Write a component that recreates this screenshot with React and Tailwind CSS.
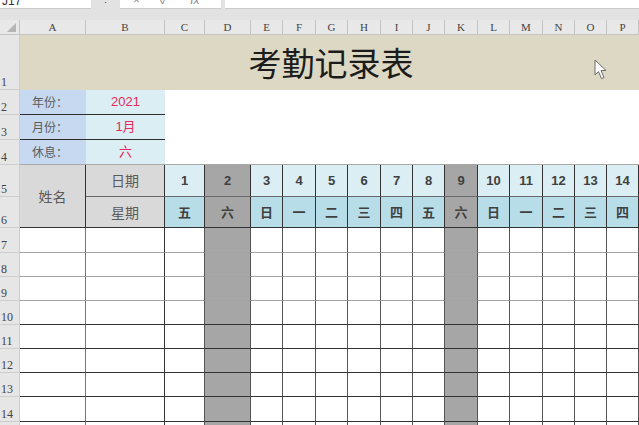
import React from 'react';

const cjk = '"Noto Sans CJK SC", "Noto Sans", sans-serif';
const serif = '"Liberation Serif", "DejaVu Serif", serif';
const arial = '"Liberation Sans", "Noto Sans CJK SC", sans-serif';

const letters = ['A', 'B', 'C', 'D', 'E', 'F', 'G', 'H', 'I', 'J', 'K', 'L', 'M', 'N', 'O', 'P'];

const days = [
  [1, '五'], [2, '六'], [3, '日'], [4, '一'], [5, '二'], [6, '三'], [7, '四'],
  [8, '五'], [9, '六'], [10, '日'], [11, '一'], [12, '二'], [13, '三'], [14, '四'],
];

const info = [
  { row: 2, label: '年份：', value: '2021' },
  { row: 3, label: '月份：', value: '1月' },
  { row: 4, label: '休息：', value: '六' },
];

const dataRows = [7, 8, 9, 10, 11, 12, 13, 14, 15];

const RowNum = ({ n }) => (
  <div
    className="bg-[#e6e6e6] border-b border-r border-[#cdcdcd] flex items-end pl-[1px] text-[12px] leading-none text-[#444] pb-[1px]"
    style={{ fontFamily: serif }}
  >
    {n}
  </div>
);

const Cursor = () => (
  <svg className="absolute left-[594px] top-[59px]" width="15" height="22" viewBox="0 0 15 22">
    <path d="M1 1 L1 16 L4.5 12.5 L7.5 19.5 L10 18.5 L7 11.5 L12 11.5 Z" fill="#fff" stroke="#6b6b6b" strokeWidth="1" strokeLinejoin="round" />
  </svg>
);

export default function App() {
  return (
    <div className="w-[639px] h-[425px] overflow-hidden bg-white relative">
      {/* formula bar */}
      <div className="h-[20px] bg-[#e2e2e2] flex items-start text-[#333]" style={{ fontFamily: arial }}>
        <div className="w-[91px] h-[9px] bg-white overflow-hidden border-b border-[#cbcbcb]">
          <div className="text-[12px] leading-none -mt-[5px] pl-[2px]">J17</div>
        </div>
        <div className="w-[29px] h-[9px] overflow-hidden flex justify-center">
          <div className="text-[11px] leading-none -mt-[6px] text-[#555]">⋮</div>
        </div>
        <div className="w-[101px] h-[9px] bg-white overflow-hidden border-b border-[#cbcbcb] flex text-[#888]">
          <div className="text-[12px] leading-none -mt-[6px] ml-[13px]">×</div>
          <div className="text-[12px] leading-none -mt-[6px] ml-[20px]">✓</div>
          <div className="text-[12px] leading-none -mt-[6px] ml-[22px] italic">fx</div>
        </div>
        <div className="w-[4px]" />
        <div className="flex-1 h-[9px] bg-white border-b border-[#cbcbcb]" />
      </div>

      <div className="grid grid-cols-[20px_66px_79px_40px_46px_32px_33px_32px_33px_32px_32px_33px_32px_33px_32px_32px_32px] grid-rows-[15px_55px_25px_25px_25px_32px_31px_25px_24px_24px_24px_24px_24px_24px_25px_24px]">
        {/* column headers */}
        <div className="bg-[#e8e8e8] border-b border-r border-[#c4c4c4] flex items-end justify-end pr-[3px] pb-[2px]">
          <div className="w-0 h-0 border-l-[9px] border-l-transparent border-b-[9px] border-b-[#b5b5b5]" />
        </div>
        {letters.map((l) => (
          <div
            key={l}
            className="bg-[#e8e8e8] border-b border-r border-[#c4c4c4] flex items-end justify-center pb-[1px] text-[11px] leading-none text-[#444]"
            style={{ fontFamily: serif }}
          >
            {l}
          </div>
        ))}

        {/* title */}
        <RowNum n={1} />
        <div
          className="col-span-16 bg-[#ddd8c4] flex items-center justify-center text-[33px] text-[#1c1c1c] pl-[3px]"
          style={{ fontFamily: cjk }}
        >
          考勤记录表
        </div>

        {/* info rows */}
        {info.map((r) => (
          <React.Fragment key={r.row}>
            <RowNum n={r.row} />
            <div
              className={`bg-[#c6d9f0] flex items-center pl-[12px] text-[12px] text-[#5c5c5c] border-b ${r.row === 4 ? 'border-[#a8a8a8]' : 'border-[#2f2f2f]'}`}
              style={{ fontFamily: cjk }}
            >
              {r.label}
            </div>
            <div
              className={`bg-[#dbeef4] flex items-center justify-center text-[13px] text-[#e8285a] border-b ${r.row === 4 ? 'border-[#a8a8a8]' : 'border-[#2f2f2f]'}`}
              style={{ fontFamily: arial }}
            >
              {r.value}
            </div>
            <div className={`col-span-14 bg-white ${r.row === 4 ? 'border-b border-[#a8a8a8]' : ''}`} />
          </React.Fragment>
        ))}

        {/* header row 5 */}
        <RowNum n={5} />
        <div
          className="row-span-2 bg-[#d9d9d9] border-r border-b border-[#333] flex items-center justify-center text-[14px] text-[#5a5a5a]"
          style={{ fontFamily: cjk }}
        >
          姓名
        </div>
        <div
          className="bg-[#d9d9d9] border-r border-b border-r-[#333] border-b-[#6a6a6a] flex items-center justify-center text-[14px] text-[#5a5a5a]"
          style={{ fontFamily: cjk }}
        >
          日期
        </div>
        {days.map(([d, w]) => (
          <div
            key={d}
            className={`${w === '六' ? 'bg-[#a6a6a6]' : 'bg-[#dbeef4]'} border-r border-b border-r-[#333] border-b-[#6a6a6a] flex items-center justify-center text-[13px] font-bold text-[#404040]`}
            style={{ fontFamily: arial }}
          >
            {d}
          </div>
        ))}

        {/* header row 6 */}
        <RowNum n={6} />
        <div
          className="bg-[#d9d9d9] border-r border-b border-[#333] flex items-center justify-center text-[14px] text-[#5a5a5a]"
          style={{ fontFamily: cjk }}
        >
          星期
        </div>
        {days.map(([d, w]) => (
          <div
            key={d}
            className={`${w === '六' ? 'bg-[#a6a6a6]' : 'bg-[#b7dee8]'} border-r border-b border-[#333] flex items-center justify-center text-[13px] font-bold text-[#404040]`}
            style={{ fontFamily: cjk }}
          >
            {w}
          </div>
        ))}

        {/* data rows */}
        {dataRows.map((r) => {
          const bottom = r <= 9 ? 'border-b-[#a3a3a3]' : 'border-b-[#333]';
          return (
            <React.Fragment key={r}>
              <RowNum n={r} />
              <div className={`bg-white border-r border-b border-r-[#777] ${bottom}`} />
              <div className={`bg-white border-r border-b border-r-[#333] ${bottom}`} />
              {days.map(([d, w]) => (
                <div
                  key={d}
                  className={`${w === '六' ? 'bg-[#a6a6a6]' : 'bg-white'} border-r border-b border-r-[#555] ${bottom}`}
                />
              ))}
            </React.Fragment>
          );
        })}
      </div>

      <Cursor />
    </div>
  );
}
